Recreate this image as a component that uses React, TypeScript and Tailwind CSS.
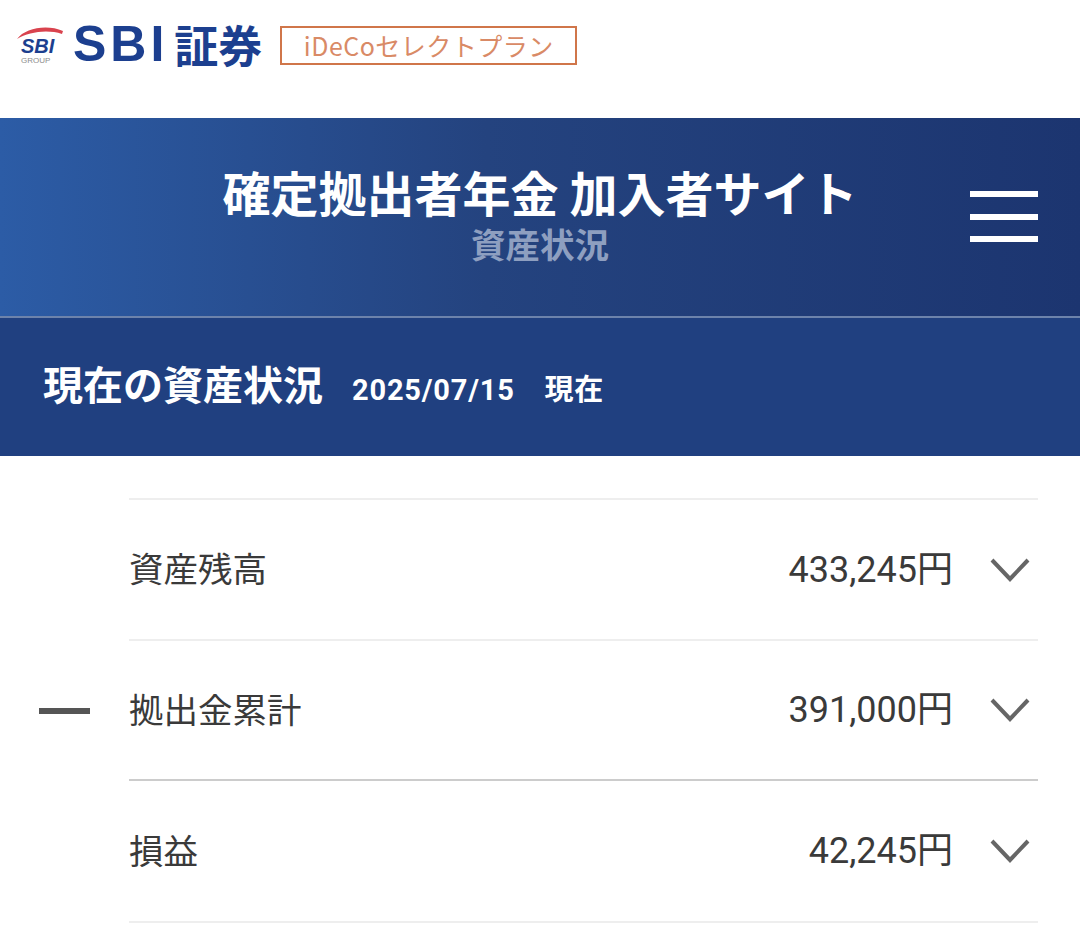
const rows = [
  { label: '資産残高', value: '433,245円', line: 'border-[#eeeeee]', h: 'h-[141px]' },
  { label: '拠出金累計', value: '391,000円', line: 'border-[#cccccc]', h: 'h-[140px]', minus: true },
  { label: '損益', value: '42,245円', line: 'border-[#eeeeee]', h: 'h-[142px]' },
]

function Logo() {
  return (
    <div className="flex h-[118px] items-start pl-[15px] pt-[21px]">
      <svg width="50" height="44" viewBox="0 0 50 44" className="mt-[4px]">
        <path d="M2 14 C10 3 32 -1 48 6 L47 9 C32 4 14 7 2 14 Z" fill="#d9434e" />
        <text x="6" y="28" fontSize="20" fontWeight="700" fontStyle="italic" fill="#1c3f8f" fontFamily="Liberation Sans, sans-serif">SBI</text>
        <text x="6" y="38" fontSize="8" fill="#8d8d8d" fontFamily="Liberation Sans, sans-serif">GROUP</text>
      </svg>
      <div className="ml-[8px] flex h-[46px] items-center text-[#1c3f8f]">
        <span className="font-['Liberation_Sans',sans-serif] text-[50px] leading-none font-bold tracking-[4px]">SBI</span>
        <span className="ml-[6px] font-['Noto_Sans_CJK_JP',sans-serif] text-[44px] leading-none font-bold">証券</span>
      </div>
      <div className="ml-[18px] mt-[5px] flex h-[39px] w-[297px] items-center justify-center border-2 border-[#d0764a] font-['Noto_Sans_CJK_JP',sans-serif] text-[25px] leading-none tracking-[0.5px] text-[#d98a66]">
        iDeCoセレクトプラン
      </div>
    </div>
  )
}

function Row({ label, value, line, h, minus }: { label: string; value: string; line: string; h: string; minus?: boolean }) {
  return (
    <div className="flex items-center">
      <div className="flex w-[129px] shrink-0 pl-[39px]">
        {minus && <div className="h-[6px] w-[51px] bg-[#555555]" />}
      </div>
      <div className={`mr-[42px] flex flex-1 items-center border-b-2 ${line} ${h} pr-[8px] leading-none text-[#3a3a3a]`}>
        <span className="flex-1 pb-[4px] font-['Noto_Sans_CJK_JP',sans-serif] text-[34.5px]">{label}</span>
        <span className="font-['Roboto','Noto_Sans_CJK_JP',sans-serif] text-[36px]">{value}</span>
        <svg width="40" height="26" viewBox="0 0 40 26" fill="none" className="ml-[37px]">
          <path d="M2 3 L20 22 L38 3" stroke="#666666" strokeWidth="4" />
        </svg>
      </div>
    </div>
  )
}

export default function App() {
  return (
    <div className="h-[934px] w-[1080px] overflow-hidden bg-white">
      <Logo />
      <header className="flex h-[198px] items-center bg-gradient-to-r from-[#2c5ca6] via-[#24437f] via-45% to-[#1c3570] pr-[42px] font-['Noto_Sans_CJK_JP',sans-serif]">
        <div className="flex-1 pl-[110px] pb-[8px] text-center font-bold">
          <div className="text-[48px] leading-[58px] text-white">確定拠出者年金 加入者サイト</div>
          <div className="mt-[2px] text-[34.5px] leading-[42px] text-[#8e9fc0]">資産状況</div>
        </div>
        <div className="flex w-[68px] flex-col gap-[16.5px] pb-[1px]">
          <div className="h-[6px] bg-white" />
          <div className="h-[6px] bg-white" />
          <div className="h-[6px] bg-white" />
        </div>
      </header>
      <div className="flex h-[140px] items-center gap-[29px] border-t-2 border-[#6d83ab] bg-[#204080] pl-[43px] font-bold text-white">
        <h1 className="pb-[8px] font-['Noto_Sans_CJK_JP',sans-serif] text-[40px] leading-none">現在の資産状況</h1>
        <span className="pt-[6px] font-['Roboto','Noto_Sans_CJK_JP',sans-serif] text-[29px] leading-none tracking-[0.8px]">2025/07/15　現在</span>
      </div>
      <div className="mt-[42px] ml-[129px] mr-[42px] border-t-2 border-[#eeeeee]" />
      {rows.map((r) => (
        <Row key={r.label} {...r} />
      ))}
    </div>
  )
}
